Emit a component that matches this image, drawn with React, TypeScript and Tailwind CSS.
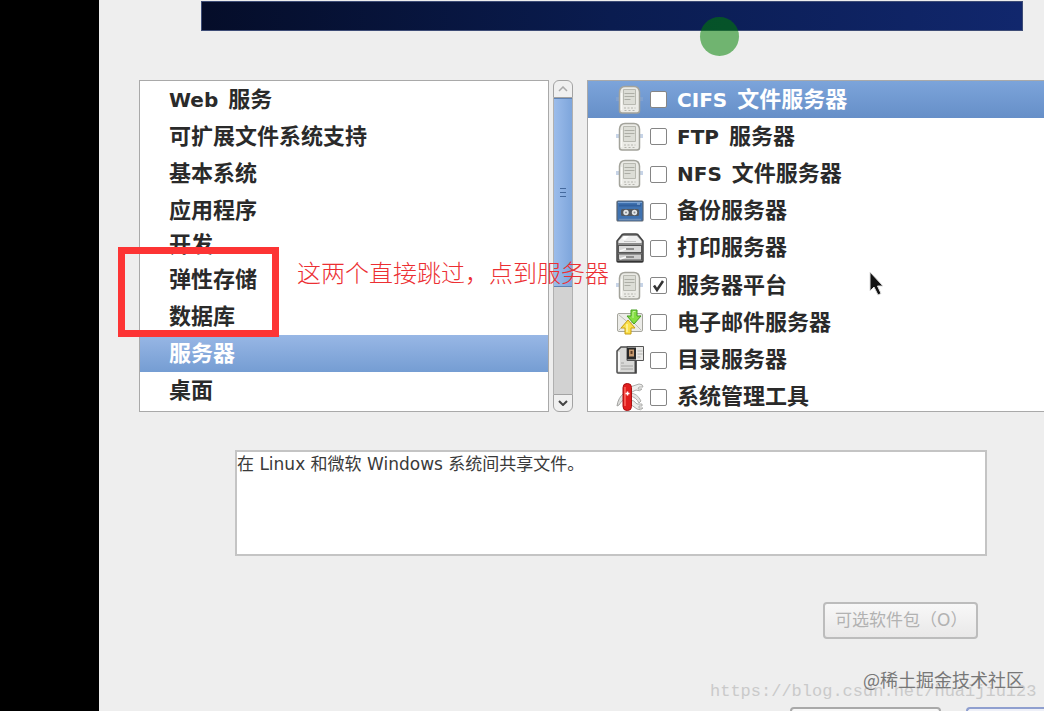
import React, { useState } from "react";

type IconName = "server" | "tape" | "printer" | "mail" | "directory" | "tools";

interface Service {
    id: string;
    label: string;
    icon: IconName;
}

const categories = [
    "Web 服务",
    "可扩展文件系统支持",
    "基本系统",
    "应用程序",
    "开发",
    "弹性存储",
    "数据库",
    "服务器",
    "桌面",
];

const services: Service[] = [
    { id: "cifs", label: "CIFS 文件服务器", icon: "server" },
    { id: "ftp", label: "FTP 服务器", icon: "server" },
    { id: "nfs", label: "NFS 文件服务器", icon: "server" },
    { id: "backup", label: "备份服务器", icon: "tape" },
    { id: "print", label: "打印服务器", icon: "printer" },
    { id: "platform", label: "服务器平台", icon: "server" },
    { id: "mail", label: "电子邮件服务器", icon: "mail" },
    { id: "directory", label: "目录服务器", icon: "directory" },
    { id: "tools", label: "系统管理工具", icon: "tools" },
];

const ServerIcon = () => (
    <svg viewBox="0 0 28 30" className="h-[30px] w-7">
        <path d="M0 13h27M0 15h27" stroke="#8fa9cf" strokeWidth="1" />
        <path d="M3.500 7Q4 1.500 9 1.500h9q5 0 5.500 5.500v18.500q0 2.500-2.500 2.500H6q-2.500 0-2.500-2.500z" fill="#ebebe6" stroke="#a3a39b" strokeWidth="1.500" />
        <path d="M7.500 4.500h12v15h-12z" fill="#dcddd6" stroke="#b8b9b1" />
        <path d="M8.500 8.500h10M8.500 11.500h10M8.500 14.500h6" stroke="#adaea6" />
        <path d="M8 23h2M11.500 23h2M15 23h2M18.500 23h1M8.500 25.500h2M12.500 25.500h2M16.500 25.500h2" stroke="#b5b5ae" />
        <path d="M5.500 8v17" stroke="#fafaf7" strokeWidth="1.500" />
    </svg>
);

const TapeIcon = () => (
    <svg viewBox="0 0 28 30" className="h-[30px] w-7">
        <rect x="1" y="5" width="26" height="20" rx="1" fill="#3f72b0" stroke="#5a6470" strokeWidth="1.200" />
        <path d="M2 6.500h24" stroke="#7ba3d4" />
        <path d="M3 9.500h22" stroke="#315f9c" strokeWidth="2" />
        <path d="M21 8h3" stroke="#a9c7ea" />
        <rect x="5" y="13" width="18" height="7" rx="1.500" fill="#51575f" />
        <circle cx="10" cy="16.500" r="2.700" fill="#e3e6e8" />
        <circle cx="18.500" cy="16.500" r="2.700" fill="#e3e6e8" />
        <circle cx="10" cy="16.500" r="1" fill="#868c93" />
        <circle cx="18.500" cy="16.500" r="1" fill="#868c93" />
        <path d="M3 23.500h22" stroke="#6c8eb8" strokeWidth="1.500" />
    </svg>
);

const PrinterIcon = () => (
    <svg viewBox="0 0 28 30" className="h-[30px] w-7">
        <path d="M1 10V8l4-5q1-2 3-2h12q2 0 3 2l4 5v20q0 1-1 1H2q-1 0-1-1z" fill="#8c8c8c" stroke="#444" strokeWidth="1.500" />
        <path d="M2.500 10V8L7 3h14l4.500 5v2z" fill="#eeeeee" />
        <path d="M6 6l2-3h5l-4 4z" fill="#fff" />
        <path d="M8 8.500h12" stroke="#c5c5c5" />
        <rect x="2.500" y="12.500" width="23" height="7" fill="#dadada" stroke="#555" />
        <rect x="2.500" y="21" width="23" height="6" fill="#cecece" stroke="#555" />
        <path d="M10 16h8M10 24h8" stroke="#777" strokeWidth="1.500" />
        <path d="M4 18l6-2M4 26l6-2" stroke="#f8f8f8" strokeWidth="1.500" />
        <path d="M1 28.500h26" stroke="#333" />
    </svg>
);

const MailIcon = () => (
    <svg viewBox="0 0 28 30" className="h-[30px] w-7">
        <rect x="1.500" y="5.500" width="25" height="18" rx="1.500" fill="#ecece8" stroke="#a6a69e" />
        <path d="M3 7l11 9 11-9M3 22l8-8M25 22l-8-8" fill="none" stroke="#bcbcb5" />
        <path d="M15 2h6v6h4l-7 8-7-8h4z" fill="#85df42" stroke="#459d20" />
        <path d="M17 3.500h2.500M17 4v6" stroke="#c4f59c" />
        <path d="M12 12l7 8h-4v6H9v-6H5z" fill="#fbe04a" stroke="#c69e14" />
        <path d="M11 16v8" stroke="#fff6a8" strokeWidth="1.500" />
    </svg>
);

const DirectoryIcon = () => (
    <svg viewBox="0 0 28 30" className="h-[30px] w-7">
        <path d="M1 6l4-4h15v26H2q-1 0-1-1z" fill="#d9d9d7" stroke="#4c4c4c" strokeWidth="1.500" />
        <path d="M3 7v19" stroke="#fff" strokeWidth="1.500" />
        <path d="M5 18h3M5 21h12M5 24h12" stroke="#a4a4a2" />
        <path d="M11 1.500h16.500v14H11z" fill="#e8e8e6" stroke="#555" />
        <rect x="11" y="2.500" width="9" height="12" fill="#282828" />
        <rect x="13" y="4.500" width="5" height="7" fill="#c79b70" />
        <rect x="14.500" y="6" width="2" height="3" fill="#5f3d23" />
        <path d="M21.500 6h5M21.500 9h5M21.500 12h3" stroke="#b2b2af" />
        <path d="M19.500 16v12" stroke="#444" strokeWidth="2" />
    </svg>
);

const ToolsIcon = () => (
    <svg viewBox="0 0 28 30" className="h-[30px] w-7">
        <path d="M8 11Q2 16 1 24l2-1q2-4 6-6z" fill="#dededc" stroke="#a4a4a2" />
        <path d="M14 5l9-3q4 0 4 3h-4l-1 2h4q-2 3-6 1l-6 3z" fill="#ededeb" stroke="#acacaa" />
        <path d="M14 11q7 0 11 8l-2 2q-3-6-9-7z" fill="#e4e4e2" stroke="#b0b0ae" />
        <path d="M14 18q4 0 7 4h5v2h-3v2h4q-2 3-6 1l-7-5z" fill="#ededeb" stroke="#acacaa" />
        <rect x="7" y="1.500" width="8.500" height="27" rx="4" fill="#e11d1d" stroke="#a81111" />
        <path d="M9 5v19" stroke="#ff6a61" strokeWidth="1.500" />
        <path d="M9.500 11.500h4M11.500 9.500v4" stroke="#fff" strokeWidth="1.500" />
    </svg>
);

const icons: Record<IconName, React.FC> = {
    server: ServerIcon,
    tape: TapeIcon,
    printer: PrinterIcon,
    mail: MailIcon,
    directory: DirectoryIcon,
    tools: ToolsIcon,
};

// Latin words are set a little smaller than the Chinese text beside them
const MixedText = ({ text }: { text: string }) => (
    <span className="whitespace-nowrap">
        {text.split(/([A-Za-z]+ )/).map((part, i) =>
            /[A-Za-z]/.test(part) ? (
                <span key={i} className="mr-[3px] whitespace-pre text-xl leading-6">{part}</span>
            ) : (
                part
            ),
        )}
    </span>
);

const ScrollBar = () => (
    <div className="mx-1 flex w-5 shrink-0 flex-col">
        <button type="button" aria-label="向上滚动" className="flex h-[18px] items-center justify-center rounded-t-md border border-[#a3a3a3] bg-[#f0f0f0]">
            <svg viewBox="0 0 10 6" className="h-[6px] w-[10px]">
                <path d="M1 5l4-4 4 4" fill="none" stroke="#aaa" strokeWidth="1.500" />
            </svg>
        </button>
        <div className="flex flex-1 flex-col border-x border-[#b0b0b0] bg-[#d2d2d2]">
            <div className="flex h-[189px] flex-col items-center justify-center gap-[3px] border-y border-[#5f83b5] bg-linear-to-r from-[#9cbcea] to-[#7ea6dc]">
                <div className="h-px w-[6px] bg-[#44699d]" />
                <div className="h-px w-[6px] bg-[#44699d]" />
                <div className="h-px w-[6px] bg-[#44699d]" />
            </div>
        </div>
        <button type="button" aria-label="向下滚动" className="flex h-[18px] items-center justify-center rounded-b-md border border-[#a3a3a3] bg-[#f0f0f0]">
            <svg viewBox="0 0 10 6" className="h-[6px] w-[10px]">
                <path d="M1 1l4 4 4-4" fill="none" stroke="#444" strokeWidth="2" />
            </svg>
        </button>
    </div>
);

const App = () => {
    const [category, setCategory] = useState("服务器");
    const [current, setCurrent] = useState("cifs");
    const [checked, setChecked] = useState<string[]>(["platform"]);

    const toggle = (id: string) => {
        setCurrent(id);
        setChecked((prev) => (prev.includes(id) ? prev.filter((item) => item !== id) : [...prev, id]));
    };

    return (
        <div className="relative flex h-screen overflow-hidden bg-[#eeeeee] font-['DejaVu_Sans','Noto_Sans_CJK_SC',sans-serif] text-[#2a2a2a]">
            <div className="w-[99px] shrink-0 bg-black" />

            <main className="flex min-w-0 flex-1 flex-col">
                <div className="mt-px mr-[21px] ml-[102px] h-[30px] shrink-0 border border-[#3d4c76] bg-linear-to-r from-[#050d29] via-[#0a1c50] to-[#11276d]" />

                <div className="mt-[49px] ml-10 flex h-[332px] shrink-0 text-[22px] leading-6 font-bold">
                    <ul className="min-w-0 flex-[409] overflow-hidden border border-[#a9a9a9] bg-white">
                        {categories.map((name) => (
                            <li key={name}>
                                <button
                                    type="button"
                                    onClick={() => setCategory(name)}
                                    className={`flex w-full items-center pl-[29px] ${name === "开发" ? "h-8" : "h-[37px]"} ${
                                        category === name ? "bg-linear-to-b from-[#98b7e5] to-[#759dd3] text-white" : ""
                                    }`}
                                >
                                    <MixedText text={name} />
                                </button>
                            </li>
                        ))}
                    </ul>

                    <ScrollBar />

                    <div className="ml-[10px] min-w-0 flex-[457] overflow-hidden border border-r-0 border-[#a9a9a9] bg-white">
                        <ul className="grid h-[335px] auto-rows-fr">
                            {services.map(({ id, label, icon }) => {
                                const Icon = icons[icon];
                                return (
                                    <li
                                        key={id}
                                        className={`flex items-center pl-7 ${
                                            current === id ? "bg-linear-to-b from-[#7ca4da] to-[#668fc8] text-white" : ""
                                        }`}
                                    >
                                        <Icon />
                                        <span className="ml-[6px] grid size-[17px] shrink-0">
                                            <input
                                                id={id}
                                                type="checkbox"
                                                checked={checked.includes(id)}
                                                onChange={() => toggle(id)}
                                                className="col-start-1 row-start-1 size-[17px] appearance-none rounded-xs border border-[#858585] bg-white"
                                            />
                                            {checked.includes(id) && (
                                                <svg viewBox="0 0 17 17" className="pointer-events-none col-start-1 row-start-1 size-[17px]">
                                                    <path d="M4 8.500l3 4.500 6-9" fill="none" stroke="#333" strokeWidth="2.500" />
                                                </svg>
                                            )}
                                        </span>
                                        <label htmlFor={id} className="ml-[10px]">
                                            <MixedText text={label} />
                                        </label>
                                    </li>
                                );
                            })}
                        </ul>
                    </div>
                </div>

                <div className="mt-[38px] mr-[57px] ml-[136px] h-[106px] shrink-0 border-2 border-[#c4c4c4] bg-white text-[17px] leading-6 text-[#3a3a3a]">
                    在 Linux 和微软 Windows 系统间共享文件。
                </div>

                <button
                    type="button"
                    disabled
                    className="mt-[46px] mr-[66px] flex h-[37px] w-[155px] shrink-0 items-center self-end rounded border-2 border-[#bcbcbc] bg-linear-to-b from-[#f8f8f8] to-[#e9e8e8] pl-[10px] text-[17px] whitespace-nowrap text-[#b2b2b2]"
                >
                    可选软件包（O）
                </button>

                <div className="mt-[68px] flex shrink-0 justify-end gap-[25px] overflow-hidden">
                    <button type="button" aria-label="返回" className="h-[37px] w-[151px] shrink-0 rounded border-2 border-[#a9a9a9] bg-[#f8f8f8]" />
                    <button type="button" aria-label="下一步" className="h-[37px] w-[78px] shrink-0 rounded-l border-2 border-r-0 border-[#8f9fcf] bg-[#eef0f8]" />
                </div>
            </main>

            {/* tutorial notes drawn over the installer */}
            <div className="absolute top-[17px] left-[700px] size-[39px] rounded-full bg-[#008000]/53" />
            <div className="absolute top-[247px] left-[118px] h-[90px] w-[161px] border-[7px] border-[#fd3434]" />
            <p className="absolute top-[256px] left-[297px] font-['Noto_Sans_CJK_SC',sans-serif] text-2xl leading-8 font-light whitespace-nowrap text-[#ec2f33]">
                这两个直接跳过，点到服务器
            </p>
            <svg viewBox="0 0 16 26" className="absolute top-[271px] left-[869px] h-[26px] w-4">
                <path d="M1 1v19l4-4 4 8 3-1.500-3.500-7.500H14z" fill="#111" stroke="#ddd" strokeWidth="1" />
            </svg>
            <p className="absolute top-[680px] left-[710px] font-['Liberation_Mono',monospace] text-[17px] leading-6 whitespace-nowrap text-[#cacaca]">
                https://blog.csdn.net/huaijiu123
            </p>
            <p className="absolute top-[667px] right-[20px] font-['Noto_Sans_CJK_SC',sans-serif] text-lg leading-6 whitespace-nowrap text-[#777777]">
                @稀土掘金技术社区
            </p>
        </div>
    );
};

export default App;
